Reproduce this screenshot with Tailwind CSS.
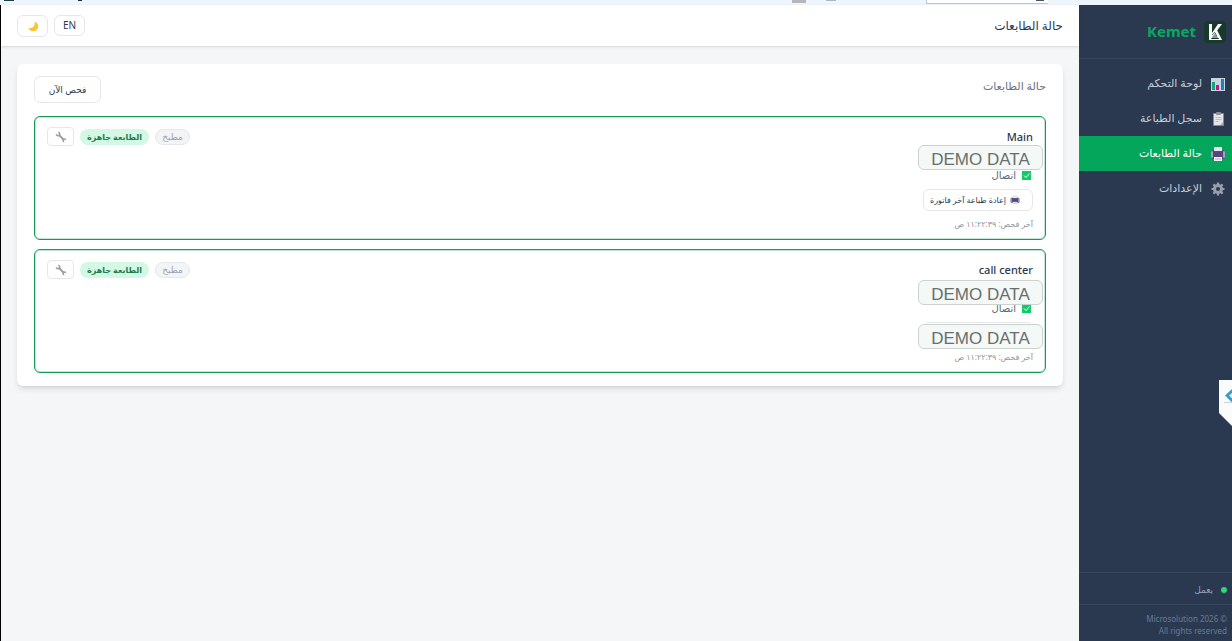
<!DOCTYPE html>
<html lang="ar" dir="rtl">

<head>
    <meta charset="UTF-8">
    <meta name="viewport" content="width=device-width, initial-scale=1.0">
    <title>Kemet - حالة الطابعات</title>
    <script src="https://cdn.jsdelivr.net/npm/@tailwindcss/browser@4"></script>
</head>

<body class="flex min-h-screen flex-col bg-[#f5f6f7] font-['Noto_Sans','DejaVu_Sans',sans-serif] text-[#2a3950]">
    <!-- shared icons -->
    <svg class="hidden">
        <symbol id="printer" viewBox="0 0 16 16">
            <rect x="4" y="1" width="8" height="6" fill="#e9e6ee" />
            <rect x="1" y="4" width="14" height="9" rx="2.500" fill="#54487a" />
            <rect x="1" y="5" width="2" height="7" rx="1" fill="#a79fc0" />
            <rect x="13" y="5" width="2" height="7" rx="1" fill="#a79fc0" />
            <rect x="4" y="1" width="8" height="4" fill="#e9e6ee" />
            <path d="M4 11h8v4h-8z" fill="#f2f0f5" />
            <path d="M5 13h6" stroke="#b5aecb" />
        </symbol>
        <symbol id="wrench" viewBox="0 0 16 16">
            <g fill="none" stroke="#9a9ba6">
                <path d="M5 5l6.500 6.500" stroke-width="2.600" />
                <path d="M4.500 1.500C6.500 2.500 6.800 4.500 5.600 5.600S2.500 6.500 1.500 4.500" stroke-width="2" />
                <path d="M14.500 11.500C12.500 10 11 10.500 10.800 11.200S10.500 13.500 12 14.500" stroke-width="2" />
            </g>
        </symbol>
    </svg>

    <div class="flex h-[5px] items-start justify-between overflow-hidden bg-[#eef5fd] px-1" dir="ltr">
        <div class="flex gap-16">
            <span class="h-px w-2.5 bg-[#1d4038]"></span>
            <span class="h-px w-1 bg-[#1f2937]"></span>
        </div>
        <div class="flex pr-[180px]">
            <span class="mr-5 h-[3px] w-3.5 bg-[#b4b6ba]"></span>
            <span class="mr-[90px] h-px w-2.5 bg-[#b4b6ba]"></span>
            <span class="flex h-1 w-[122px] justify-end border-b border-l border-[#c3c6ca] bg-white pr-1">
                <span class="h-px w-2 bg-[#4b5563]"></span>
            </span>
        </div>
    </div>

    <div class="flex flex-1">
        <aside class="flex w-[153px] shrink-0 flex-col bg-[#2a3950]">
            <div class="flex h-[54px] items-center gap-2 border-b border-[#36465e] px-1.5">
                <svg class="size-[22px]" viewBox="0 0 22 22">
                    <rect width="22" height="22" rx="4" fill="#173a2b" />
                    <path d="M5 3h3v9l6-9h4l-6 8-4 5v3H5z" fill="#fff" />
                    <path d="M11 11l2-2 5 10h-3z" fill="#fff" />
                    <path d="M9 14h3M8 16h6M6 18.500h9" stroke="#fff" />
                    <path d="M8 14l3-3M7 17.500h8" stroke="#173a2b" stroke-width=".7" />
                </svg>
                <span class="text-[15px] font-bold text-[#09a862]">Kemet</span>
            </div>

            <nav class="flex flex-1 flex-col pt-[7px] text-[11px] text-[#c5ced9]">
                <a href="#" class="flex h-[35px] items-center gap-2 px-1.5">
                    <svg class="size-4" viewBox="0 0 16 16">
                        <rect x="1" y="2" width="14" height="13" fill="#c9d4de" />
                        <rect x="2" y="6" width="3" height="8" fill="#14a37a" />
                        <rect x="6" y="9" width="3" height="5" fill="#c2187e" />
                        <rect x="11" y="3" width="3" height="11" fill="#1684bd" />
                    </svg>
                    لوحة التحكم
                </a>
                <a href="#" class="flex h-[35px] items-center gap-2 px-1.5">
                    <svg class="size-4" viewBox="0 0 16 16">
                        <rect x="3" y="2" width="11" height="13" rx="1" fill="#b0805a" />
                        <rect x="4" y="3" width="9" height="11" fill="#e6e6e8" />
                        <rect x="6" y="1" width="5" height="3" rx="1" fill="#8a8f98" />
                        <path d="M5.500 6.500h6M5.500 8.500h6M5.500 10.500h3" stroke="#b9bcc2" />
                        <path d="M10 14l3-3v3z" fill="#a9adb4" />
                    </svg>
                    سجل الطباعة
                </a>
                <a href="#" class="flex h-[35px] items-center gap-2 bg-[#04a65b] px-1.5 text-white">
                    <svg class="size-4"><use href="#printer" /></svg>
                    حالة الطابعات
                </a>
                <a href="#" class="flex h-[35px] items-center gap-2 px-1.5">
                    <svg class="size-4" viewBox="0 0 16 16" fill="none" stroke="#9a9dab">
                        <path d="M8 1.500v13M1.500 8h13M3.400 3.400l9.200 9.200M12.600 3.400l-9.200 9.200" stroke-width="2.200" />
                        <circle cx="8" cy="8" r="3.800" stroke-width="2.600" />
                        <circle cx="8" cy="8" r="2" fill="#2a3950" stroke="none" />
                    </svg>
                    الإعدادات
                </a>
            </nav>

            <div class="flex h-8 items-center gap-2 border-t border-[#36465e] px-[5px] pt-0.5 text-[9px] text-[#94a0b1]">
                <span class="size-1.5 rounded-full bg-[#2fd673]"></span>
                يعمل
            </div>
            <div class="border-t border-[#36465e] px-[5px] pt-2 pb-1 text-[8px] leading-3 text-[#6b7a90]">
                <p>© 2026 Microsolution</p>
                <p>All rights reserved</p>
            </div>
        </aside>

        <main class="min-w-0 flex-1 border-l border-black">
            <header class="flex h-[41px] items-center justify-between bg-white px-4 shadow-sm">
                <h1 class="text-xs font-medium">حالة الطابعات</h1>
                <div class="flex items-center gap-1.5">
                    <button class="h-[21px] w-[31px] rounded-md border border-gray-200 text-[10px]">EN</button>
                    <button class="flex h-[22px] w-[31px] items-center justify-center rounded-md border border-gray-200" aria-label="الوضع الليلي">
                        <svg class="size-2.5" viewBox="0 0 10 10">
                            <path d="M6.500 0.500A5 5 0 1 1 0.500 7A5 5 0 0 0 6.500 0.500z" fill="#fbc531" />
                        </svg>
                    </button>
                </div>
            </header>

            <section class="mx-4 mt-[18px] rounded-md bg-white px-[17px] pt-3 pb-[13px] shadow-md">
                <div class="mb-[13px] flex h-[27px] items-start justify-between">
                    <h2 class="text-[11px] leading-5 text-[#6b7280]">حالة الطابعات</h2>
                    <button class="h-[27px] w-[67px] rounded-md border border-gray-200 text-[9px]">فحص الآن</button>
                </div>

                <div class="flex flex-col gap-[9px]">
                    <article class="relative h-[124px] rounded-md border border-[#159a54] px-3 pt-2.5 ring-1 ring-[#159a54]/25 ring-inset">
                        <div class="flex h-[19px] items-center justify-between">
                            <h3 class="text-[11px] leading-5 font-medium">Main</h3>
                            <div class="flex items-center gap-1.5">
                                <span class="flex h-4 w-[35px] items-center justify-center rounded-full border border-gray-200 bg-gray-100 text-[9px] text-gray-400">مطبخ</span>
                                <span class="flex h-4 w-[69px] items-center justify-center rounded-full bg-[#d3f8e4] text-[8px] font-semibold text-[#237a4c]">الطابعة جاهزة</span>
                                <button class="flex h-[19px] w-[27px] items-center justify-center rounded border border-gray-200" aria-label="إعدادات الطابعة">
                                    <svg class="size-3"><use href="#wrench" /></svg>
                                </button>
                            </div>
                        </div>
                        <div class="mt-[21px] flex h-4 items-center gap-1.5 px-0.5 text-[10px] text-[#5d6776]">
                            <svg class="size-[9px]" viewBox="0 0 9 9">
                                <rect width="9" height="9" fill="#0fcb6a" />
                                <path d="M2 4.500l2 2 3.500-4" fill="none" stroke="#fff" />
                            </svg>
                            اتصال
                        </div>
                        <button class="mt-1.5 flex h-[22px] w-[110px] items-center gap-1 rounded-md border border-gray-200 px-3 text-[8px] whitespace-nowrap">
                            <svg class="size-2.5 shrink-0"><use href="#printer" /></svg>
                            إعادة طباعة آخر فاتورة
                        </button>
                        <p class="mt-[5px] text-[8px] leading-4 text-[#8d9399]">آخر فحص: ١١:٢٢:٣٩ ص</p>
                        <span class="absolute top-7 right-0.5 flex h-[25px] w-[125px] items-center justify-center rounded-md border border-[#ccd3cf] bg-[#f4f8f6] pt-1 font-['Liberation_Sans',sans-serif] text-[17px] text-[#68706c]">DEMO DATA</span>
                    </article>

                    <article class="relative h-[124px] rounded-md border border-[#159a54] px-3 pt-2.5 ring-1 ring-[#159a54]/25 ring-inset">
                        <div class="flex h-[19px] items-center justify-between">
                            <h3 class="text-[11px] leading-5 font-medium">call center</h3>
                            <div class="flex items-center gap-1.5">
                                <span class="flex h-4 w-[35px] items-center justify-center rounded-full border border-gray-200 bg-gray-100 text-[9px] text-gray-400">مطبخ</span>
                                <span class="flex h-4 w-[69px] items-center justify-center rounded-full bg-[#d3f8e4] text-[8px] font-semibold text-[#237a4c]">الطابعة جاهزة</span>
                                <button class="flex h-[19px] w-[27px] items-center justify-center rounded border border-gray-200" aria-label="إعدادات الطابعة">
                                    <svg class="size-3"><use href="#wrench" /></svg>
                                </button>
                            </div>
                        </div>
                        <div class="mt-[21px] flex h-4 items-center gap-1.5 px-0.5 text-[10px] text-[#5d6776]">
                            <svg class="size-[9px]" viewBox="0 0 9 9">
                                <rect width="9" height="9" fill="#0fcb6a" />
                                <path d="M2 4.500l2 2 3.500-4" fill="none" stroke="#fff" />
                            </svg>
                            اتصال
                        </div>
                        <div class="mt-1.5 h-[22px] w-[110px] rounded-md border border-gray-200"></div>
                        <p class="mt-[5px] text-[8px] leading-4 text-[#8d9399]">آخر فحص: ١١:٢٢:٣٩ ص</p>
                        <span class="absolute top-[30px] right-0.5 flex h-[25px] w-[125px] items-center justify-center rounded-md border border-[#ccd3cf] bg-[#f4f8f6] pt-1 font-['Liberation_Sans',sans-serif] text-[17px] text-[#68706c]">DEMO DATA</span>
                        <span class="absolute top-[74px] right-0.5 flex h-[25px] w-[125px] items-center justify-center rounded-md border border-[#ccd3cf] bg-[#f4f8f6] pt-1 font-['Liberation_Sans',sans-serif] text-[17px] text-[#68706c]">DEMO DATA</span>
                    </article>
                </div>
            </section>
        </main>
    </div>

    <!-- side tab of the remote tool -->
    <svg class="fixed top-[380px] right-0 h-[46px] w-[13px]" viewBox="0 0 13 46">
        <path d="M0 0h13v46L0 33z" fill="#fafbfc" />
        <path d="M13 9l-7 6.500 7 7z" fill="#3c9cc0" />
        <path d="M13 13l-3 2.500 3 3z" fill="#d5edf5" />
        <path d="M5 22.500h8" stroke="#cfd4d8" />
    </svg>
</body>

</html>
